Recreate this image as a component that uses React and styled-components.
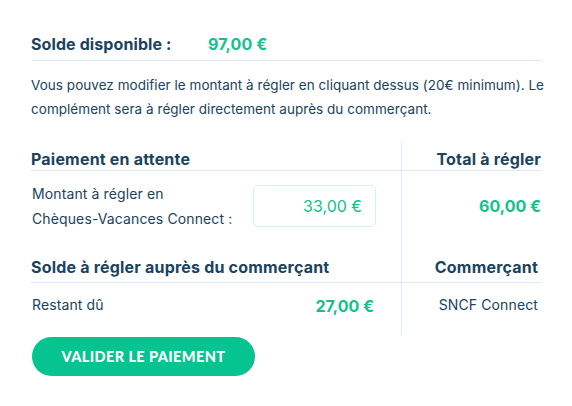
import styled, { createGlobalStyle } from "styled-components";

const navy = "#19435f";
const green = "#12c28c";
const line = "#dce9fb";

const GlobalStyle = createGlobalStyle`
  body {
    margin: 0;
    background: #ffffff;
    font-family: "Inter", "Liberation Sans", sans-serif;
    color: ${navy};
  }
`;

export default function App() {
  return (
    <>
      <GlobalStyle />
      <Wrapper>
        <BalanceRow>
          <BalanceLabel>Solde disponible :</BalanceLabel>
          <BalanceValue>97,00 €</BalanceValue>
        </BalanceRow>

        <Intro>
          Vous pouvez modifier le montant à régler en cliquant dessus (20€ minimum). Le
          <br />
          complément sera à régler directement auprès du commerçant.
        </Intro>

        <Table>
          <HeadCell>Paiement en attente</HeadCell>
          <HeadCell $side>Total à régler</HeadCell>

          <BodyCell $top={10} $bottom={23}>
            <Label>
              Montant à régler en
              <br />
              Chèques-Vacances Connect :
            </Label>
            <AmountInput>33,00 €</AmountInput>
          </BodyCell>
          <BodyCell $side $top={10} $bottom={23}>
            <Amount>60,00 €</Amount>
          </BodyCell>

          <HeadCell $low>Solde à régler auprès du commerçant</HeadCell>
          <HeadCell $side $low $inset>Commerçant</HeadCell>

          <BodyCell $top={11} $bottom={18} $align="flex-start" $amountGap={27}>
            <Label $single>Restant dû</Label>
            <Amount $shift>27,00 €</Amount>
          </BodyCell>
          <BodyCell $side $top={11} $bottom={18} $align="flex-start" $inset>
            <Label $single>SNCF Connect</Label>
          </BodyCell>
        </Table>

        <SubmitButton type="button">Valider le paiement</SubmitButton>
      </Wrapper>
    </>
  );
}

const Wrapper = styled.div`
  width: 510px;
  padding: 32px 30px 30px 32px;
`;

const BalanceRow = styled.div`
  display: flex;
  align-items: baseline;
  padding-bottom: 4px;
  border-bottom: 1px solid ${line};
  font-size: 16px;
  line-height: 24px;
  font-weight: 700;
`;

const BalanceLabel = styled.span`
  width: 177px;
  margin-left: -1px;
  color: ${navy};
  letter-spacing: 0.1px;
`;

const BalanceValue = styled.span`
  color: ${green};
  letter-spacing: 0.1px;
`;

const Intro = styled.p`
  margin: 12px 0 0 -1px;
  font-size: 13.5px;
  line-height: 24px;
  letter-spacing: 0.04px;
  color: ${navy};
  white-space: nowrap;
`;

const Table = styled.div`
  display: grid;
  grid-template-columns: 369px 141px;
  margin-top: 21px;
`;

const HeadCell = styled.div`
  display: flex;
  align-items: flex-end;
  justify-content: ${({ $side }) => ($side ? "flex-end" : "flex-start")};
  height: 29px;
  box-sizing: border-box;
  padding: 0 ${({ $inset }) => ($inset ? "4px" : "1px")} ${({ $low }) => ($low ? "5px" : "1px")} 0;
  margin-left: ${({ $side }) => ($side ? "0" : "-1px")};
  border-bottom: 1px solid ${line};
  border-left: ${({ $side }) => ($side ? `1px solid ${line}` : "none")};
  font-size: 16px;
  line-height: 20px;
  font-weight: 700;
  letter-spacing: 0.2px;
  color: ${navy};
`;

const BodyCell = styled.div`
  display: flex;
  align-items: ${({ $align }) => $align || "center"};
  justify-content: ${({ $side }) => ($side ? "flex-end" : "space-between")};
  padding: ${({ $top }) => $top}px
    ${({ $side, $inset, $amountGap }) => ($side ? ($inset ? "4px" : "1px") : `${$amountGap || 25}px`)}
    ${({ $bottom }) => $bottom}px 0;
  border-left: ${({ $side }) => ($side ? `1px solid ${line}` : "none")};
`;

const Label = styled.div`
  font-size: 14px;
  line-height: 25px;
  letter-spacing: 0.12px;
  color: ${navy};
  margin-top: ${({ $single }) => ($single ? "-2px" : "0")};
`;

const AmountInput = styled.div`
  box-sizing: border-box;
  width: 123px;
  height: 42px;
  display: flex;
  align-items: center;
  justify-content: flex-end;
  padding-right: 13px;
  border: 1.5px solid #d4f4e7;
  border-radius: 5px;
  font-size: 16px;
  color: ${green};
`;

const Amount = styled.div`
  font-size: 16px;
  line-height: 20px;
  font-weight: 700;
  color: ${green};
  margin-top: ${({ $shift }) => ($shift ? "2px" : "0")};
`;

const SubmitButton = styled.button`
  display: block;
  margin-top: 2px;
  width: 223px;
  height: 39px;
  border: none;
  border-radius: 20px;
  background: #06c48f;
  color: #ffffff;
  font-family: "Lato", "Liberation Sans", sans-serif;
  font-size: 14.5px;
  font-weight: 900;
  letter-spacing: 0.4px;
  text-transform: uppercase;
  cursor: pointer;
`;
